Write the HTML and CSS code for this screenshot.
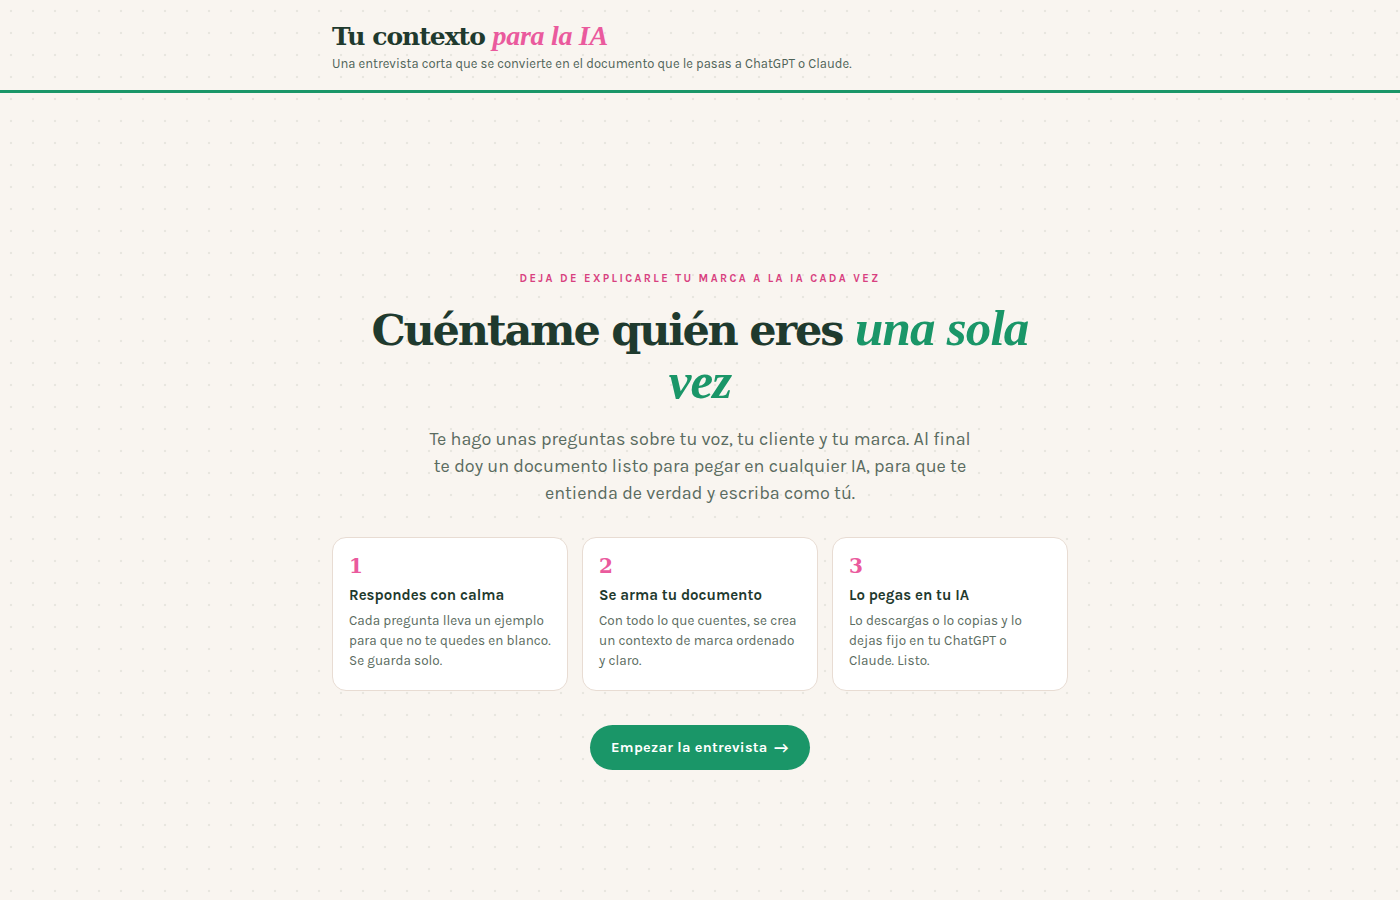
FILE: index.html
```html
<!DOCTYPE html>
<html lang="es">
<head>
<meta charset="utf-8">
<title>Tu contexto para la IA</title>
<link rel="stylesheet" href="styles.css">
</head>
<body>
<header class="site-header">
  <div class="wrap">
    <h1 class="brand">Tu contexto <em>para la IA</em></h1>
    <p class="tagline">Una entrevista corta que se convierte en el documento que le pasas a ChatGPT o Claude.</p>
  </div>
</header>
<main class="hero">
  <div class="wrap hero-inner">
    <p class="eyebrow">Deja de explicarle tu marca a la IA cada vez</p>
    <h2 class="hero-title">Cuéntame quién eres <em>una sola vez</em></h2>
    <p class="lead">Te hago unas preguntas sobre tu voz, tu cliente y tu marca. Al final te doy un documento listo para pegar en cualquier IA, para que te entienda de verdad y escriba como tú.</p>
    <div class="steps">
      <div class="step">
        <div class="step-num">1</div>
        <h3 class="step-title">Respondes con calma</h3>
        <p class="step-text">Cada pregunta lleva un ejemplo para que no te quedes en blanco. Se guarda solo.</p>
      </div>
      <div class="step">
        <div class="step-num">2</div>
        <h3 class="step-title">Se arma tu documento</h3>
        <p class="step-text">Con todo lo que cuentes, se crea un contexto de marca ordenado y claro.</p>
      </div>
      <div class="step">
        <div class="step-num">3</div>
        <h3 class="step-title">Lo pegas en tu IA</h3>
        <p class="step-text">Lo descargas o lo copias y lo dejas fijo en tu ChatGPT o Claude. Listo.</p>
      </div>
    </div>
    <a class="cta" href="#">Empezar la entrevista <span class="arrow">→</span></a>
  </div>
</main>
</body>
</html>
```

FILE: styles.css
```css
* { box-sizing: border-box; }
html, body { margin: 0; padding: 0; }
body {
  font-family: "Karla", "Lato", "Noto Sans", sans-serif;
  color: #1f3a2e;
  background-color: #f9f5f0;
  background-image: radial-gradient(circle at 11px 11px, #e8e6df 1.2px, transparent 1.6px);
  background-size: 22px 22px;
  min-height: 900px;
}
.wrap {
  width: 736px;
  margin: 0 auto;
}
.site-header {
  border-bottom: 3px solid #1a9668;
  padding: 19px 0 18px;
}
.brand {
  margin: 0;
  font-family: "DejaVu Serif", "Liberation Serif", serif;
  font-weight: 700;
  font-size: 25px;
  line-height: 34px;
  letter-spacing: -1px;
  color: #1f3a2e;
}
.brand em {
  font-family: "Liberation Serif", serif;
  font-style: italic;
  font-weight: 700;
  font-size: 28px;
  letter-spacing: -0.3px;
  color: #ea5a9d;
}
.tagline {
  margin: 1px 0 0;
  font-size: 13px;
  line-height: 17px;
  color: #4f6358;
}
.hero {
  padding: 178px 0 100px;
}
.hero-inner {
  display: flex;
  flex-direction: column;
  align-items: center;
  text-align: center;
}
.eyebrow {
  margin: 0;
  font-size: 11px;
  font-weight: 700;
  letter-spacing: 2.4px;
  text-transform: uppercase;
  color: #d8407f;
  line-height: 16px;
}
.hero-title {
  margin: 16px 0 0;
  width: 700px;
  font-family: "DejaVu Serif", "Liberation Serif", serif;
  font-weight: 700;
  font-size: 43px;
  line-height: 51px;
  letter-spacing: -2.2px;
  color: #1f3a2e;
}
.hero-title em {
  font-family: "Liberation Serif", serif;
  font-style: italic;
  font-weight: 700;
  font-size: 51px;
  line-height: 51px;
  letter-spacing: -0.8px;
  color: #1a9668;
}
.lead {
  margin: 17px 0 0;
  width: 560px;
  font-size: 18px;
  line-height: 27px;
  color: #5a6b60;
}
.steps {
  margin-top: 30px;
  width: 100%;
  display: grid;
  grid-template-columns: repeat(3, 1fr);
  gap: 14px;
  text-align: left;
}
.step {
  background: #ffffff;
  border: 1px solid #e8dcd3;
  border-radius: 14px;
  padding: 14px 16px 20px;
  height: 154px;
}
.step-num {
  font-family: "DejaVu Serif", "Liberation Serif", serif;
  font-weight: 700;
  font-size: 20px;
  line-height: 28px;
  color: #ea5a9d;
}
.step-title {
  margin: 5px 0 0;
  font-size: 15px;
  font-weight: 700;
  line-height: 20px;
  color: #1f3a2e;
}
.step-text {
  margin: 6px 0 0;
  font-size: 13.5px;
  line-height: 20px;
  color: #5a6b60;
}
.cta {
  margin-top: 34px;
  display: inline-flex;
  align-items: center;
  gap: 6px;
  height: 45px;
  padding: 0 21px;
  border-radius: 23px;
  background: #1a9668;
  color: #ffffff;
  font-size: 14.5px;
  font-weight: 700;
  letter-spacing: 0.3px;
  text-decoration: none;
}
.arrow { font-size: 15px; }
```
